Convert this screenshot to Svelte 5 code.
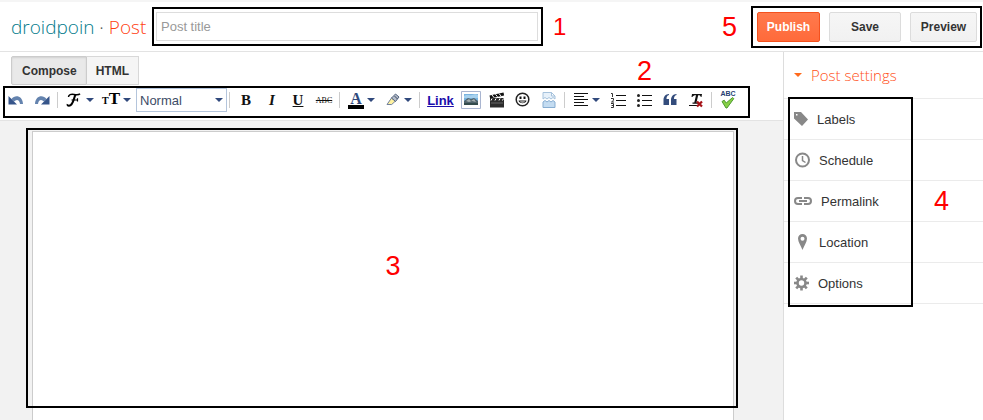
<script lang="ts">
  let title = '';
  let body = '';
  let mode = 'compose';
  let format = 'Normal';
  let settingsOpen = true;

  const settings = [
    { name: 'Labels', icon: 'tag', width: 14 },
    { name: 'Schedule', icon: 'clock', width: 16 },
    { name: 'Permalink', icon: 'chain', width: 18 },
    { name: 'Location', icon: 'pin', width: 16 },
    { name: 'Options', icon: 'gear', width: 15 }
  ];

  const teeth = [0, 45, 90, 135, 180, 225, 270, 315];

  function toggleSettings() {
    settingsOpen = !settingsOpen;
  }
</script>

<div class="app">
  <header>
    <h1><a href="#blog">droidpoin</a> <span class="dot">·</span> <span class="page-name">Post</span></h1>
    <div class="title-box">
      <input type="text" aria-label="Post title" placeholder="Post title" bind:value={title} />
    </div>
    <span class="mark mark-small">1</span>
    <span class="mark mark-actions">5</span>
    <div class="actions">
      <button class="btn publish">Publish</button>
      <button class="btn save">Save</button>
      <button class="btn preview">Preview</button>
    </div>
  </header>

  <div class="content">
    <main>
      <div class="tabs">
        <button class="tab" class:active={mode == 'compose'} on:click={() => (mode = 'compose')}>Compose</button>
        <button class="tab" class:active={mode == 'html'} on:click={() => (mode = 'html')}>HTML</button>
        <span class="mark mark-toolbar">2</span>
      </div>

      <div class="toolbar" role="toolbar" aria-label="Formatting">
        <button class="tool" aria-label="Undo">
          <svg width="16" height="16" viewBox="0 0 16 16">
            <path d="M3.500 7C7 2.500 14.500 3.500 15 12h-3C11.500 7.500 8.500 7 6 9.500z" fill="#6483ae" />
            <path d="M.5 4v8.500H9z" fill="#36558a" />
          </svg>
        </button>
        <button class="tool" aria-label="Redo">
          <svg width="16" height="16" viewBox="0 0 16 16">
            <path d="M12.500 7C9 2.500 1.500 3.500 1 12h3C4.500 7.500 7.500 7 10 9.500z" fill="#6483ae" />
            <path d="M15.500 4v8.500H7z" fill="#36558a" />
          </svg>
        </button>
        <span class="sep"></span>
        <button class="tool drop" aria-label="Font">
          <svg width="18" height="18" viewBox="0 0 18 18" fill="none" stroke="#000">
            <path d="M3.500 6C3.500 3.600 6 3 9 3.500c3 .5 5 .4 6-.7" stroke-width="1.500" />
            <path d="M10.500 3.700C8.500 7 8.600 14.500 4 14.700c-1.200 0-1.700-.7-1.300-1.400" stroke-width="2" />
            <path d="M6.500 9h6M12.500 7.300v3.200" stroke-width="1.200" />
          </svg>
          <i class="caret"></i>
        </button>
        <button class="tool drop" aria-label="Font size">
          <span class="size-icon"><small>T</small>T</span>
          <i class="caret"></i>
        </button>
        <span class="format">
          <select aria-label="Format" bind:value={format}>
            <option>Normal</option>
            <option>Heading</option>
            <option>Subheading</option>
            <option>Minor heading</option>
          </select>
          <i class="caret"></i>
        </span>
        <span class="sep"></span>
        <button class="tool letter" aria-label="Bold"><b>B</b></button>
        <button class="tool letter" aria-label="Italic"><b><em>I</em></b></button>
        <button class="tool letter underline" aria-label="Underline"><b>U</b></button>
        <button class="tool strike" aria-label="Strikethrough">ABC</button>
        <span class="sep"></span>
        <button class="tool drop" aria-label="Text color">
          <span class="color-icon">A</span>
          <i class="caret"></i>
        </button>
        <button class="tool drop" aria-label="Text background color">
          <svg width="16" height="16" viewBox="0 0 16 16">
            <path d="M2 12.500 6.500 6l4 3-3.800 3.500z" fill="#fff2a0" stroke="#71809b" />
            <path d="M6.500 6 10.500 2l3.500 3-3.500 4.500z" fill="#b6bdc9" stroke="#51627f" />
            <path d="m9.500 4 3 3" stroke="#384965" />
          </svg>
          <i class="caret"></i>
        </button>
        <span class="sep"></span>
        <button class="tool link">Link</button>
        <button class="tool" aria-label="Insert image">
          <svg width="20" height="18" viewBox="0 0 20 18">
            <path d="M.5.5h19v17H.5z" fill="#fff" stroke="#a9b5d0" />
            <path d="M3 3h14v11H3z" fill="#78b3df" />
            <path d="M3 5c3-2 5 0 8-1s4-1 6 0v3H3z" fill="#a6d1ee" />
            <path d="m3 10 4-3 3 1 3-1 4 3v4H3z" fill="#51646c" />
            <path d="m5 10 3-2 2 2 3-2 2 3-4-1-3 1z" fill="#a5afb0" />
            <path d="M3 12h14v2H3z" fill="#344c4c" />
          </svg>
        </button>
        <button class="tool" aria-label="Insert video">
          <svg width="16" height="16" viewBox="0 0 16 16">
            <path d="M1 6h14v9.500H1z" fill="#2b2b2b" />
            <path d="m.5 3.500 14-3 .6 3L1.200 6.500z" fill="#111" />
            <path d="m3 3 2 2.500M6.500 2.300l2 2.500M10 1.500 12 4M3 6.500l-1 2M7 6.500l-1 2M11 6.500l-1 2M14.500 6.500l-1 2" stroke="#fff" />
            <path d="M2 10h12v2H2z" fill="#484848" />
          </svg>
        </button>
        <button class="tool" aria-label="Insert emoticon">
          <svg width="16" height="16" viewBox="0 0 16 16">
            <circle cx="7.500" cy="7.500" r="6.300" fill="#fff" stroke="#222" stroke-width="1.500" />
            <path d="M4.500 4.500h2v2.500h-2zM8.500 4.500h2v2.500h-2z" fill="#111" />
            <path d="M3.500 8.500h8c-.5 3.500-7.500 3.500-8 0z" fill="#222" />
            <path d="M5 9.500h5c-1 1.300-4 1.300-5 0z" fill="#fff" />
          </svg>
        </button>
        <button class="tool" aria-label="Insert jump break">
          <svg width="16" height="16" viewBox="0 0 16 16">
            <path d="M2 .5h8.500L14 4v3l-2-1.500L10 7 8 5.500 6 7 4 5.500 2 7z" fill="#e7f1fa" stroke="#a6c2dc" />
            <path d="M10.500.5V4H14z" fill="#fff" stroke="#a6c2dc" />
            <path d="m2 10 2-1.500L6 10l2-1.500 2 1.500 2-1.500 2 1.500v5.500H2z" fill="#c4dcf1" stroke="#87add1" />
          </svg>
        </button>
        <span class="sep"></span>
        <button class="tool drop" aria-label="Alignment">
          <svg width="16" height="14" viewBox="0 0 16 14">
            <path d="M1 .5h14M1 3.500h10M1 6.500h14M1 9.500h10M1 12.500h14" stroke="#111" />
          </svg>
          <i class="caret"></i>
        </button>
        <button class="tool" aria-label="Numbered list">
          <svg width="16" height="16" viewBox="0 0 16 16">
            <path d="M6 3.500h10M6 8.500h10M6 13.500h10" stroke="#111" />
            <path d="M1 1.500h1.500V5M1 6.500h2.500v1.800L1.500 10H4M1 11.500h2.500v4H1M1.500 13.500h2" fill="none" stroke="#333" />
          </svg>
        </button>
        <button class="tool" aria-label="Bullet list">
          <svg width="16" height="16" viewBox="0 0 16 16">
            <path d="M6 3.500h10M6 8.500h10M6 13.500h10" stroke="#111" />
            <circle cx="2.500" cy="3.500" r="1.500" fill="#222" />
            <circle cx="2.500" cy="8.500" r="1.500" fill="#222" />
            <circle cx="2.500" cy="13.500" r="1.500" fill="#222" />
          </svg>
        </button>
        <button class="tool" aria-label="Quote">
          <svg width="16" height="14" viewBox="0 0 16 14">
            <path d="M7 2C5 2.500 4.500 4 4.500 6H7v6H1.500V7C1.500 3.500 3.500 1.300 7 1zM14.500 2c-2 .5-2.500 2-2.500 4h2.500v6H9V7c0-3.500 2-5.700 5.500-6z" fill="#334c7c" />
          </svg>
        </button>
        <button class="tool" aria-label="Remove formatting">
          <svg width="16" height="16" viewBox="0 0 16 16">
            <path d="M4 2h10l-.5 3h-.8c0-1.300-.6-1.800-2.500-1.800L8.500 10.500h1.700v1.300H4.500v-1.300h1.800L8 3.200C6 3.200 5.300 3.700 4.300 5h-.8z" fill="#111" />
            <path d="M1 13.500h9" stroke="#111" />
            <path d="m9 9.500 5 5m0-5-5 5" stroke="#a51217" stroke-width="2.200" />
          </svg>
        </button>
        <span class="sep"></span>
        <button class="tool spell" aria-label="Check spelling">
          <span>ABC</span>
          <svg width="14" height="12" viewBox="0 0 14 12">
            <path d="m1 4.500 2.200-1.300 2 2.800L11.500.6l1.300 1L6 11H5z" fill="#86cf45" stroke="#4d9a30" />
          </svg>
        </button>
      </div>

      <div class="canvas">
        <div class="paper">
          <textarea aria-label="Post body" bind:value={body}></textarea>
          <div class="frame editor-frame"><span class="mark">3</span></div>
        </div>
      </div>
    </main>

    <aside>
      <h2>
        <button class="toggle" aria-expanded={settingsOpen} on:click={toggleSettings}>
          <i class="caret orange"></i>Post settings
        </button>
      </h2>
      {#if settingsOpen}
        <div class="settings">
          <ul>
            {#each settings as item}
              <li>
                <a href="#{item.icon}">
                  <svg width={item.width} height="18" viewBox="0 0 {item.width} 18" fill="#888">
                    {#if item.icon == 'tag'}
                      <path fill-rule="evenodd" d="M0 2h7l7 7.500L8 16 0 8.500zM2 4v1.500h1.500V4z" />
                    {:else if item.icon == 'clock'}
                      <circle cx="8.500" cy="9" r="6.500" fill="none" stroke="#888" stroke-width="2" />
                      <path d="M8.500 5v4.500l3 2" fill="none" stroke="#888" stroke-width="1.500" />
                    {:else if item.icon == 'chain'}
                      <path d="M8 6H4a3 3 0 0 0 0 6h4M10 6h4a3 3 0 0 1 0 6h-4" fill="none" stroke="#888" stroke-width="2" />
                      <path d="M5 8h8v2H5z" />
                    {:else if item.icon == 'pin'}
                      <path fill-rule="evenodd" d="M8.500 1A4.500 4.500 0 0 0 4 5.500C4 9 7 13 8.500 17 10 13 13 9 13 5.500A4.500 4.500 0 0 0 8.500 1zm0 2.700a2 2 0 1 1 0 4 2 2 0 0 1 0-4z" />
                    {:else}
                      <circle cx="7.500" cy="9" r="4" fill="none" stroke="#888" stroke-width="2.600" />
                      {#each teeth as angle}
                        <path d="M6.200 1.500h2.600V5H6.200z" transform="rotate({angle} 7.5 9)" />
                      {/each}
                    {/if}
                  </svg>
                  {item.name}
                </a>
              </li>
            {/each}
          </ul>
          <div class="frame settings-frame"></div>
          <span class="mark mark-settings">4</span>
        </div>
      {/if}
    </aside>
  </div>
</div>

<style>
  :global(body) {
    margin: 0;
    background: white;
  }

  .app {
    display: flex;
    flex-direction: column;
    min-height: 100vh;
    font-family: 'Liberation Sans', Arial, sans-serif;
    font-size: 13px;
    color: #333;
  }

  button,
  input,
  select,
  textarea {
    box-sizing: border-box;
    margin: 0;
    font-family: inherit;
    font-size: 13px;
  }

  button {
    cursor: pointer;
  }

  svg {
    display: block;
    flex: none;
  }

  header {
    display: flex;
    align-items: center;
    box-sizing: border-box;
    height: 52px;
    padding: 0 1px 0 11px;
    border-top: 2px solid #f5f5f5;
    border-bottom: 1px solid #e3e3e3;
  }

  h1 {
    width: 141px;
    margin: 0;
    font-family: 'Open Sans', sans-serif;
    font-size: 19px;
    font-weight: 300;
    line-height: 28px;
    white-space: nowrap;
  }

  h1 a {
    color: #007a8a;
    text-decoration: none;
  }

  .dot {
    color: #555;
  }

  .page-name {
    color: #ff4010;
  }

  .title-box {
    flex: 0 1 391px;
    box-sizing: border-box;
    padding: 3px 3px 3px 2px;
    border: 2px solid black;
  }

  .title-box input {
    display: block;
    width: 100%;
    height: 29px;
    padding: 0 4px;
    border: 1px solid #ddd;
  }

  .title-box input::placeholder {
    color: #999;
  }

  .mark {
    color: red;
    font-size: 27px;
    line-height: 30px;
  }

  .mark-small {
    margin-left: 10px;
    font-size: 24px;
  }

  .mark-actions {
    margin-left: auto;
    padding-right: 14px;
  }

  .actions {
    display: flex;
    gap: 9px;
    padding: 4px 3px 4px 4px;
    border: 2px solid black;
  }

  .btn {
    height: 30px;
    padding: 0;
    border: 1px solid #dcdcdc;
    border-radius: 2px;
    background: linear-gradient(#f6f6f6, #f1f1f1);
    color: #333;
    font-size: 12px;
    font-weight: bold;
  }

  .publish {
    width: 63px;
    border-color: #f4511e;
    background: linear-gradient(#ff7a4d, #ff6a3a);
    color: white;
  }

  .save {
    width: 72px;
  }

  .preview {
    width: 67px;
  }

  .content {
    display: flex;
    flex: 1;
  }

  main {
    display: flex;
    flex: 1;
    flex-direction: column;
    min-width: 0;
  }

  .tabs {
    display: flex;
    height: 30px;
    padding: 4px 131px 0 11px;
  }

  .tab {
    height: 29px;
    padding: 0 9px;
    border: 1px solid #d8d8d8;
    border-left-width: 0;
    background: #f5f5f5;
    color: #333;
    font-size: 12px;
    font-weight: bold;
  }

  .tab:first-child {
    padding-left: 10px;
    border-left-width: 1px;
    border-radius: 2px 0 0 2px;
  }

  .tab.active {
    border-color: #ccc;
    background: #e9e9e9;
    box-shadow: inset 0 1px 2px rgba(0, 0, 0, 0.1);
  }

  .mark-toolbar {
    margin-left: auto;
  }

  .toolbar {
    display: flex;
    align-items: center;
    box-sizing: border-box;
    height: 32px;
    margin: 0 33px 2px 3px;
    padding-bottom: 4px;
    outline: 2px solid black;
    outline-offset: -2px;
  }

  .tool {
    display: flex;
    flex: none;
    align-items: center;
    justify-content: center;
    width: 26px;
    height: 26px;
    padding: 0;
    border: none;
    background: none;
    color: #111;
  }

  .drop {
    gap: 3px;
    width: 37px;
  }

  .sep {
    flex: none;
    width: 1px;
    height: 16px;
    margin: 0 3px 0 2px;
    background: #ccc;
  }

  .caret {
    flex: none;
    width: 0;
    border: 4px solid transparent;
    border-top-color: #30497c;
    border-bottom-width: 0;
  }

  .orange {
    border-top-color: #ff6a1c;
  }

  .size-icon {
    font-family: 'Liberation Serif', serif;
    font-size: 17px;
    font-weight: bold;
    line-height: 18px;
    color: black;
  }

  .size-icon small {
    font-size: 10px;
  }

  .format {
    display: flex;
    align-items: center;
    flex: none;
    width: 91px;
    margin-left: 1px;
  }

  .format select {
    flex: none;
    width: 91px;
    height: 24px;
    padding: 0 3px;
    border: 1px solid #b4c5dc;
    background: white;
    appearance: none;
    color: #3d4c66;
  }

  .format .caret {
    margin-left: -12px;
    pointer-events: none;
  }

  .letter {
    font-family: 'Liberation Serif', serif;
    font-size: 15px;
  }

  .underline {
    text-decoration: underline;
  }

  .strike {
    font-family: 'Liberation Serif', serif;
    font-size: 8px;
    text-decoration: line-through;
  }

  .color-icon {
    width: 16px;
    border-bottom: 4px solid black;
    font-family: 'Liberation Serif', serif;
    font-size: 16px;
    font-weight: bold;
    line-height: 13px;
    color: #30497c;
  }

  .link {
    width: 35px;
    color: #1a0dab;
    font-weight: bold;
    text-decoration: underline;
  }

  .spell {
    flex-direction: column;
  }

  .spell span {
    font-size: 7px;
    font-weight: bold;
    line-height: 6px;
    color: #263f73;
  }

  .canvas {
    display: flex;
    flex: 1;
    padding: 10px 49px 0 32px;
    border-top: 1px solid #e3e3e3;
    background: #f2f2f2;
  }

  .paper {
    position: relative;
    display: flex;
    flex: 1;
    border: 1px solid #ccc;
    border-bottom: none;
    background: white;
  }

  textarea {
    flex: 1;
    padding: 12px;
    border: none;
    outline: none;
    background: none;
    resize: none;
  }

  .frame {
    position: absolute;
    box-sizing: border-box;
    border: 2px solid black;
    pointer-events: none;
  }

  .editor-frame {
    display: flex;
    align-items: center;
    justify-content: center;
    inset: -4px -5px 12px -7px;
    padding-left: 22px;
    padding-bottom: 4px;
  }

  aside {
    width: 199px;
    border-left: 1px solid #ddd;
  }

  h2 {
    margin: 0;
  }

  .toggle {
    display: flex;
    align-items: center;
    gap: 9px;
    width: 100%;
    height: 46px;
    padding: 0 10px;
    border: none;
    background: none;
    color: #ff4f18;
    font-family: 'Open Sans', sans-serif;
    font-size: 15px;
    font-weight: 300;
  }

  .settings {
    position: relative;
  }

  ul {
    margin: 0;
    padding: 0;
    border-top: 1px solid #ebebeb;
    list-style: none;
  }

  li a {
    display: flex;
    align-items: center;
    gap: 9px;
    height: 40px;
    padding-left: 10px;
    border-bottom: 1px solid #ebebeb;
    color: #333;
    text-decoration: none;
  }

  .settings-frame {
    inset: -1px 70px -3px 4px;
  }

  .mark-settings {
    position: absolute;
    top: 88px;
    left: 150px;
  }
</style>
